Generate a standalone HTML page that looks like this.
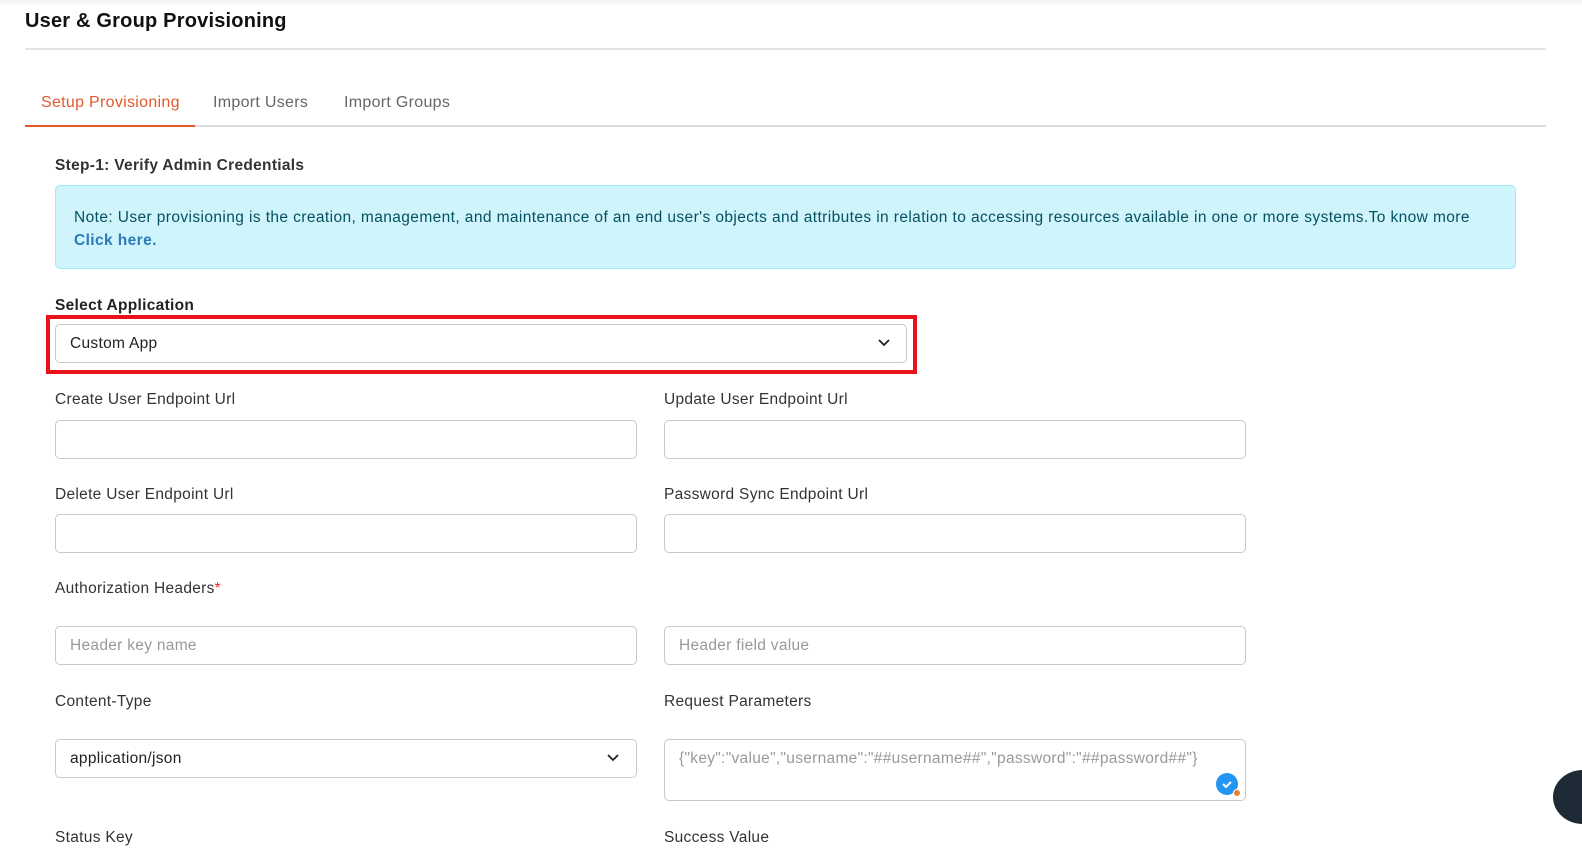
<!DOCTYPE html>
<html><head><meta charset="utf-8"><style>
*{box-sizing:border-box;margin:0;padding:0}
body{width:1582px;height:857px;overflow:hidden;background:#fff;font-family:"Liberation Sans",sans-serif;color:#333;position:relative;letter-spacing:0.3px}
.a{position:absolute}
.lbl{font-size:15.5px;color:#333}
.inp{position:absolute;border:1px solid #c9c9c9;border-radius:5px;height:39px;background:#fff;font-size:15.5px;color:#999;padding:0 14px;line-height:37px}
</style></head><body>
<div class="a" style="left:0;top:0;width:1582px;height:6px;background:linear-gradient(#f2f2f2,#fff)"></div>
<div class="a" style="left:25px;top:10px;font-size:20px;font-weight:bold;color:#111;letter-spacing:0.2px">User &amp; Group Provisioning</div>
<div class="a" style="left:25px;top:48px;width:1521px;height:2px;background:#e4e4e4"></div>
<div class="a" style="left:41px;top:94px;font-size:16px;color:#e2592c">Setup Provisioning</div>
<div class="a" style="left:213px;top:94px;font-size:16px;color:#666">Import Users</div>
<div class="a" style="left:344px;top:94px;font-size:16px;color:#666">Import Groups</div>
<div class="a" style="left:25px;top:125px;width:1521px;height:2px;background:#ddd"></div>
<div class="a" style="left:25px;top:125px;width:170px;height:2px;background:#e2592c"></div>
<div class="a" style="left:55px;top:157px;font-size:15.5px;font-weight:bold;color:#333">Step-1: Verify Admin Credentials</div>
<div class="a" style="left:55px;top:185px;width:1461px;height:84px;background:#cff4fc;border:1px solid #9eeaf9;border-radius:5px;padding:20px 18px;font-size:15.5px;line-height:23px;color:#055160;letter-spacing:0.4px;white-space:nowrap">Note: User provisioning is the creation, management, and maintenance of an end user's objects and attributes in relation to accessing resources available in one or more systems.To know more<br><b style="color:#2a7ab8">Click here.</b></div>
<div class="a" style="left:55px;top:297px;font-size:15.5px;font-weight:bold;color:#222">Select Application</div>
<div class="a" style="left:46px;top:315px;width:871px;height:59px;border:4px solid #e8131a"></div>
<div class="inp" style="left:55px;top:324px;width:852px;color:#222">Custom App</div>
<svg class="a" style="left:877px;top:338px" width="14" height="10"><path d="M2 2l5 5 5-5" stroke="#222" stroke-width="1.8" fill="none"/></svg>
<div class="a lbl" style="left:55px;top:391px">Create User Endpoint Url</div>
<div class="a lbl" style="left:664px;top:391px">Update User Endpoint Url</div>
<div class="inp" style="left:55px;top:420px;width:582px"></div>
<div class="inp" style="left:664px;top:420px;width:582px"></div>
<div class="a lbl" style="left:55px;top:486px">Delete User Endpoint Url</div>
<div class="a lbl" style="left:664px;top:486px">Password Sync Endpoint Url</div>
<div class="inp" style="left:55px;top:514px;width:582px"></div>
<div class="inp" style="left:664px;top:514px;width:582px"></div>
<div class="a lbl" style="left:55px;top:580px">Authorization Headers<span style="color:#e22">*</span></div>
<div class="inp" style="left:55px;top:626px;width:582px">Header key name</div>
<div class="inp" style="left:664px;top:626px;width:582px">Header field value</div>
<div class="a lbl" style="left:55px;top:693px">Content-Type</div>
<div class="a lbl" style="left:664px;top:693px">Request Parameters</div>
<div class="inp" style="left:55px;top:739px;width:582px;color:#222">application/json</div>
<svg class="a" style="left:606px;top:753px" width="14" height="10"><path d="M2 2l5 5 5-5" stroke="#222" stroke-width="1.8" fill="none"/></svg>
<div class="inp" style="left:664px;top:739px;width:582px;height:62px;line-height:38px">{"key":"value","username":"##username##","password":"##password##"}</div>
<div class="a" style="left:1216px;top:773px;width:22px;height:22px;border-radius:50%;background:#2196f3"></div>
<svg class="a" style="left:1220px;top:777px" width="14" height="14"><path d="M3 7l3 3 5-5" stroke="#fff" stroke-width="2" fill="none"/></svg>
<div class="a" style="left:1233px;top:789px;width:8px;height:8px;border-radius:50%;background:#f07f2a;border:1px solid #fff"></div>
<div class="a" style="left:1553px;top:770px;width:60px;height:54px;border-radius:50%;background:#1e2b36"></div>
<div class="a lbl" style="left:55px;top:829px">Status Key</div>
<div class="a lbl" style="left:664px;top:829px">Success Value</div>
</body></html>
